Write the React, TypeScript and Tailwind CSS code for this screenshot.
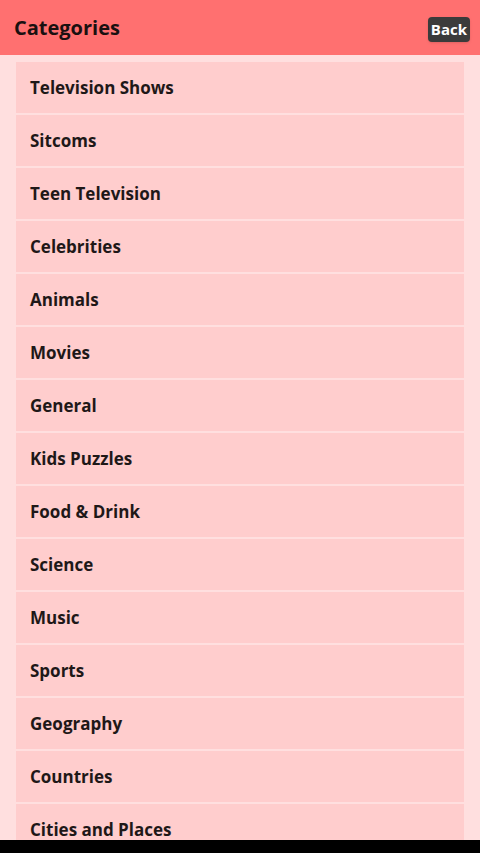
const categories = [
  "Television Shows",
  "Sitcoms",
  "Teen Television",
  "Celebrities",
  "Animals",
  "Movies",
  "General",
  "Kids Puzzles",
  "Food & Drink",
  "Science",
  "Music",
  "Sports",
  "Geography",
  "Countries",
  "Cities and Places",
];

export default function App() {
  return (
    <div className="flex h-[853px] w-[480px] flex-col overflow-hidden bg-[#ffdfdf] font-['Open_Sans',sans-serif]">
      {/* Header */}
      <div className="flex h-[55px] shrink-0 items-center justify-between bg-[#ff7070] pl-[14px] pr-[10px]">
        <h1 className="text-[20px] font-bold text-[#1a1010]">Categories</h1>
        <button className="mt-[3px] rounded-[4px] bg-[#3b3b3b] px-[3px] py-[2px] text-[15px] leading-[21px] font-bold text-white shadow-sm">
          Back
        </button>
      </div>

      {/* List */}
      <div className="flex-1 overflow-hidden px-4 pt-[7px]">
        <div className="flex flex-col gap-[2px]">
          {categories.map((name) => (
            <div
              key={name}
              className="flex h-[51px] shrink-0 items-center bg-[#ffcdcd] px-[14px] text-[17px] font-bold text-[#1e1818]"
            >
              {name}
            </div>
          ))}
        </div>
      </div>

      {/* Bottom bar */}
      <div className="h-[13px] shrink-0 bg-black" />
    </div>
  );
}
